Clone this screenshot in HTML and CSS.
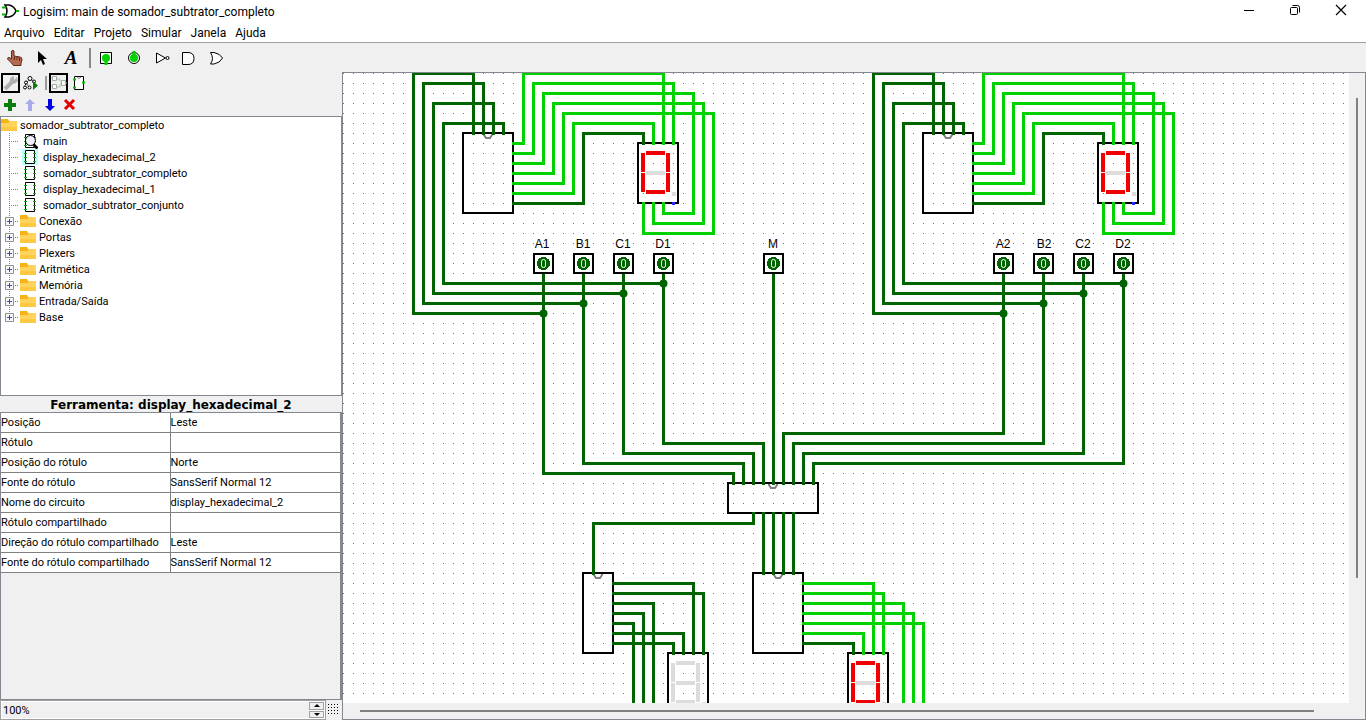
FILE: index.html
```html
<!DOCTYPE html>
<html lang="pt">
<head>
<meta charset="utf-8">
<title>Logisim: main de somador_subtrator_completo</title>
<link rel="stylesheet" href="styles.css">
</head>
<body>
<svg class="defs" aria-hidden="true">
  <symbol id="folder" viewBox="0 0 16 14"><path d="M0 1h7l1 2h8v3H0z" fill="#f5b416"/><path d="M0 5h7l2-2h7v10H0z" fill="#ffd35c"/><path d="M0 9h16v4H0z" fill="#fdc942"/></symbol>
  <symbol id="circuit" viewBox="0 0 16 16"><path d="M3.500 1.500h9v13h-9z" fill="#fff" stroke="#000"/><path d="M2 4.500h3M2 8.500h3M2 12.500h3M11 4.500h3M11 8.500h3M11 12.500h3" stroke="#0bb40b"/></symbol>
  <symbol id="branch" viewBox="0 0 20 16"><path d="M9.500 0v16M11 8.500h8" stroke="#808080" stroke-dasharray="1 1"/></symbol>
  <symbol id="plus" viewBox="0 0 20 16"><path d="M9.500 0v16M15 8.500h4" stroke="#808080" stroke-dasharray="1 1"/><path d="M5.500 4.500h8v8h-8z" fill="#f6f6f6" stroke="#919191"/><path d="M7 8.500h5M9.500 6v5" stroke="#3b52a5"/></symbol>
  <symbol id="plus-last" viewBox="0 0 20 16"><path d="M9.500 0v5M15 8.500h4" stroke="#808080" stroke-dasharray="1 1"/><path d="M5.500 4.500h8v8h-8z" fill="#f6f6f6" stroke="#919191"/><path d="M7 8.500h5M9.500 6v5" stroke="#3b52a5"/></symbol>
</svg>

<header class="titlebar">
  <svg class="logo" width="18" height="16" viewBox="0 0 18 16"><path d="M4 2h4q5 1 7 6-2 5-7 6H4q4-6 0-12z" fill="#fff" stroke="#000" stroke-width="1.500"/><path d="M1 4.500h4M1 11.500h4" stroke="#00b400" stroke-width="2"/><path d="M15 8h3" stroke="#00b400" stroke-width="2"/></svg>
  <h1 class="title">Logisim: main de somador_subtrator_completo</h1>
  <button class="win" aria-label="Minimizar"><svg width="12" height="12" viewBox="0 0 12 12"><path d="M1 6.500h10" stroke="#000"/></svg></button>
  <button class="win" aria-label="Restaurar"><svg width="12" height="12" viewBox="0 0 12 12" fill="none" stroke="#000"><rect x="1.500" y="3.500" width="7" height="7" rx="1"/><path d="M3.500 1.500h5q2 0 2 2v5"/></svg></button>
  <button class="win" aria-label="Fechar"><svg width="12" height="12" viewBox="0 0 12 12"><path d="M1 1l10 10M11 1L1 11" stroke="#000" stroke-width="1.200"/></svg></button>
</header>

<nav class="menu">
  <button>Arquivo</button><button>Editar</button><button>Projeto</button><button>Simular</button><button>Janela</button><button>Ajuda</button>
</nav>

<div class="toolbar" role="toolbar">
  <button aria-label="Testar"><svg width="18" height="18" viewBox="0 0 18 18"><path d="M5.500 2q1.500-1.500 2.500 0v5l6 1q2 0 2 3l-1 3v2.500H7.500L5 13.500 1.500 10q0-2 2-1.500l2 1.500z" fill="#b66a50" stroke="#5c2a1c"/><path d="M8.500 8v3M11 8v3M13.500 9v3" stroke="#5c2a1c"/></svg></button>
  <button aria-label="Editar"><svg width="18" height="18" viewBox="0 0 18 18"><path d="M4 2v12l3-3 2 5 2-1-2-5h4z"/></svg></button>
  <button class="letter" aria-label="Texto">A</button>
  <span class="sep"></span>
  <button aria-label="Entrada"><svg width="18" height="18" viewBox="0 0 18 18"><path d="M3.500 3.500h11v11h-11z" fill="#fff" stroke="#000"/><circle cx="9" cy="9" r="4" fill="#00d200"/><path d="M7.500 12h3v4h-3z" fill="#00d200"/></svg></button>
  <button aria-label="Saída"><svg width="18" height="18" viewBox="0 0 18 18"><circle cx="9" cy="9" r="5.500" fill="#fff" stroke="#000"/><circle cx="9" cy="9" r="4" fill="#00d200"/><path d="M7.500 2h3v4h-3z" fill="#00d200"/></svg></button>
  <button aria-label="Porta NÃO"><svg width="18" height="18" viewBox="0 0 18 18" fill="#fff" stroke="#000"><path d="M3.500 4v10l9-5z"/><circle cx="14.500" cy="9" r="1.500"/></svg></button>
  <button aria-label="Porta E"><svg width="18" height="18" viewBox="0 0 18 18"><path d="M1.500 3.500H7q6 0 6 6t-6 6H1.500z" fill="#fff" stroke="#000"/></svg></button>
  <button aria-label="Porta OU"><svg width="18" height="18" viewBox="0 0 18 18"><path d="M1.500 3.500H5q6 1 8.500 5.500-2.500 5-8.500 6H1.500q4-5.500 0-11.500z" fill="#fff" stroke="#000"/></svg></button>
</div>

<div class="work">
  <aside class="side">
    <div class="views" role="toolbar">
      <button class="on" aria-label="Ferramentas"><svg width="16" height="16" viewBox="0 0 16 16"><path d="M2 14l7-7" stroke="#b0b0b0" stroke-width="4"/><path d="M14 2l-3 3V1q-5 1-4 6 4 4 8-1z" fill="#b0b0b0"/></svg></button>
      <button aria-label="Simulação"><svg width="16" height="16" viewBox="0 0 16 16" fill="#fff" stroke="#000"><path d="M7 4L3 8l-1 4M3 8l3 4M7 4l5 4" stroke-dasharray="2 1" fill="none"/><circle cx="7" cy="3.500" r="2"/><circle cx="3" cy="7.500" r="1.500"/><circle cx="2" cy="12.500" r="1.500"/><circle cx="6.500" cy="12.500" r="1.500"/><circle cx="11" cy="6.500" r="1.500"/><path d="M10 6v9l5-4.500z" fill="#0b7d0b" stroke="none"/></svg></button>
      <span class="sep"></span>
      <button class="on" aria-label="Leiaute"><svg width="16" height="16" viewBox="0 0 16 16" fill="#fff" stroke="#a8a8a8"><path d="M6 4h3v2h2M6 12h3V9h2M14 8h2M0 3h2M0 11h2" stroke="#9bd69b" fill="none"/><path d="M1.500 1.500h4v4h-4zM1.500 9.500h4v4h-4zM10.500 5.500h4v5h-4z"/></svg></button>
      <button aria-label="Aparência"><svg width="16" height="16" viewBox="0 0 16 16"><path d="M3.500 1.500h9v13h-9z" fill="#fff" stroke="#000"/><path d="M6 2q2 3 4 0" fill="none" stroke="#777"/><path d="M2 4.500h3M2 12.500h3M11 7.500h3" stroke="#00c800" stroke-width="2"/></svg></button>
    </div>
    <div class="edits" role="toolbar">
      <button aria-label="Adicionar"><svg width="14" height="14" viewBox="0 0 14 14"><path d="M7 1v12M1 7h12" stroke="#0b7d0b" stroke-width="4"/></svg></button>
      <button aria-label="Subir" disabled><svg width="14" height="14" viewBox="0 0 14 14"><path d="M7 1l5 5H9v7H5V6H2z" fill="#a9a9ec"/></svg></button>
      <button aria-label="Descer"><svg width="14" height="14" viewBox="0 0 14 14"><path d="M7 13l5-5H9V1H5v7H2z" fill="#0000e6"/></svg></button>
      <button aria-label="Remover"><svg width="14" height="14" viewBox="0 0 14 14"><path d="M2 2l9 9M11 2l-9 9" stroke="#e00000" stroke-width="3"/></svg></button>
    </div>
    <div class="explorer">
      <div class="row root"><svg class="ico"><use href="#folder"/></svg>somador_subtrator_completo</div>
      <ul class="tree">
        <li class="row"><svg class="gut"><use href="#branch"/></svg><svg class="circ" viewBox="0 0 16 16"><use href="#circuit" width="16" height="16"/><circle cx="8.500" cy="7.500" r="5" fill="#eef" fill-opacity=".9" stroke="#000"/><path d="M11.500 11.500l4 4" stroke="#000" stroke-width="3"/></svg>main</li>
        <li class="row"><svg class="gut"><use href="#branch"/></svg><svg class="circ picked"><use href="#circuit"/></svg>display_hexadecimal_2</li>
        <li class="row"><svg class="gut"><use href="#branch"/></svg><svg class="circ"><use href="#circuit"/></svg>somador_subtrator_completo</li>
        <li class="row"><svg class="gut"><use href="#branch"/></svg><svg class="circ"><use href="#circuit"/></svg>display_hexadecimal_1</li>
        <li class="row"><svg class="gut"><use href="#branch"/></svg><svg class="circ"><use href="#circuit"/></svg>somador_subtrator_conjunto</li>
        <li class="row"><svg class="gut"><use href="#plus"/></svg><svg class="ico"><use href="#folder"/></svg>Conexão</li>
        <li class="row"><svg class="gut"><use href="#plus"/></svg><svg class="ico"><use href="#folder"/></svg>Portas</li>
        <li class="row"><svg class="gut"><use href="#plus"/></svg><svg class="ico"><use href="#folder"/></svg>Plexers</li>
        <li class="row"><svg class="gut"><use href="#plus"/></svg><svg class="ico"><use href="#folder"/></svg>Aritmética</li>
        <li class="row"><svg class="gut"><use href="#plus"/></svg><svg class="ico"><use href="#folder"/></svg>Memória</li>
        <li class="row"><svg class="gut"><use href="#plus"/></svg><svg class="ico"><use href="#folder"/></svg>Entrada/Saída</li>
        <li class="row"><svg class="gut"><use href="#plus-last"/></svg><svg class="ico"><use href="#folder"/></svg>Base</li>
      </ul>
    </div>
    <h2 class="caption">Ferramenta: display_hexadecimal_2</h2>
    <div class="attrs">
      <table>
        <tr><th>Posição</th><td>Leste</td></tr>
        <tr><th>Rótulo</th><td></td></tr>
        <tr><th>Posição do rótulo</th><td>Norte</td></tr>
        <tr><th>Fonte do rótulo</th><td>SansSerif Normal 12</td></tr>
        <tr><th>Nome do circuito</th><td>display_hexadecimal_2</td></tr>
        <tr><th>Rótulo compartilhado</th><td></td></tr>
        <tr><th>Direção do rótulo compartilhado</th><td>Leste</td></tr>
        <tr><th>Fonte do rótulo compartilhado</th><td>SansSerif Normal 12</td></tr>
      </table>
    </div>
    <div class="zoom">
      <div class="spinner">
        <input type="text" value="100%" aria-label="Zoom">
        <div class="steps">
          <button aria-label="Aumentar"><svg width="6" height="3" viewBox="0 0 6 3"><path d="M0 3l3-3 3 3z"/></svg></button>
          <button aria-label="Diminuir"><svg width="6" height="3" viewBox="0 0 6 3"><path d="M0 0l3 3 3-3z"/></svg></button>
        </div>
      </div>
      <button class="gridbtn" aria-label="Grade"><svg width="12" height="12"><defs><pattern id="mini" width="3" height="3" patternUnits="userSpaceOnUse"><path d="M0 0h1v1H0z"/></pattern></defs><rect width="12" height="12" fill="url(#mini)"/></svg></button>
    </div>
  </aside>

  <main class="pane">
    <svg class="canvas" shape-rendering="crispEdges">
      <defs>
        <pattern id="grid" width="10" height="10" patternUnits="userSpaceOnUse"><path d="M0 0h1v1H0z" fill="#777"/></pattern>
        <g id="pin">
          <rect x="-9" y="-9" width="19" height="19" fill="none" stroke="#000" stroke-width="2"/>
          <circle cx="0.500" cy="0.500" r="6.500" fill="#006400"/>
          <rect x="-1.500" y="-3.500" width="4" height="8" rx="2" fill="none" stroke="#fff" shape-rendering="auto"/>
        </g>
        <path id="notch" d="M-4 1V2L-2 5H2L4 2V1" fill="none" stroke="#808080" stroke-width="2" shape-rendering="auto"/>
        <g id="display">
          <rect width="40" height="60" fill="none" stroke="#000" stroke-width="2"/>
          <path d="M8 8h19v4H8zM3 10h4v19H3zM28 10h4v19h-4zM3 30h4v19H3zM28 30h4v19h-4zM8 47h19v4H8z" fill="currentColor"/>
          <path d="M8 28h19v4H8zM34 49h4v4h-4z" fill="#dcdcdc"/>
          <path d="M34 59h3v3h-3z" fill="#2828ff"/>
        </g>
        <g id="decoder">
          <rect x="120" y="60" width="50" height="80" fill="none" stroke="#000" stroke-width="2"/>
          <use href="#notch" x="145" y="60"/>
          <use href="#display" x="295" y="70"/>
          <g class="wire" transform="translate(.5 .5)">
            <path class="low" d="M130 60V0H70V240H200M140 60V10H80V230H240M150 60V30H90V220H280M160 60V50H100V210H320M170 130H240V60H300V70"/>
            <path class="high" d="M170 70H180V0H320V70M170 80H190V10H330V70M170 90H200V20H350V140H320V130M170 100H210V30H360V150H310V130M170 110H220V40H370V160H300V130M170 120H230V50H310V70"/>
          </g>
          <g fill="#006400" shape-rendering="auto"><circle cx="200.500" cy="240.500" r="4"/><circle cx="240.500" cy="230.500" r="4"/><circle cx="280.500" cy="220.500" r="4"/><circle cx="320.500" cy="210.500" r="4"/></g>
          <use href="#pin" x="200" y="190"/><use href="#pin" x="240" y="190"/><use href="#pin" x="280" y="190"/><use href="#pin" x="320" y="190"/>
        </g>
      </defs>
      <rect width="100%" height="100%" fill="url(#grid)"/>
      <use href="#decoder" color="#f00000"/>
      <use href="#decoder" x="460" color="#f00000"/>
      <use href="#pin" x="430" y="190"/>
      <g fill="none" stroke="#000" stroke-width="2">
        <rect x="385" y="410" width="90" height="30"/>
        <rect x="240" y="500" width="30" height="80"/>
        <rect x="410" y="500" width="50" height="80"/>
      </g>
      <use href="#notch" x="430" y="410"/><use href="#notch" x="255" y="500"/><use href="#notch" x="435" y="500"/>
      <use href="#display" x="325" y="580" color="#dcdcdc"/>
      <use href="#display" x="505" y="580" color="#f00000"/>
      <g class="wire" transform="translate(.5 .5)">
        <path class="low" d="M200 202V400H390V410M240 202V390H400V410M280 202V380H410V410M320 202V370H420V410M430 202V410M660 202V360H440V410M700 202V370H450V410M740 202V380H460V410M780 202V390H470V410M410 440V450H250V500M420 440V500M430 440V500M440 440V500M450 440V500"/>
        <path class="low" d="M270 510H350V580M270 520H360V580M270 530H310V720M270 540H300V720M270 550H290V720M270 560H340V580M270 570H330V580M460 570H510V580"/>
        <path class="high" d="M460 510H530V580M460 520H540V580M460 530H560V720M460 540H570V720M460 550H580V720M460 560H520V580"/>
      </g>
      <g class="labels">
        <text x="199" y="175">A1</text><text x="240" y="175">B1</text><text x="280" y="175">C1</text><text x="320" y="175">D1</text><text x="430" y="175">M</text>
        <text x="660" y="175">A2</text><text x="701" y="175">B2</text><text x="740" y="175">C2</text><text x="780" y="175">D2</text>
      </g>
    </svg>
    <div class="vbar"><div class="thumb"></div></div>
    <div class="hbar"><div class="thumb"></div></div>
  </main>
</div>
</body>
</html>
```
FILE: styles.css
```css
* { box-sizing: border-box; }
body {
  margin: 0;
  height: 100vh;
  display: flex;
  flex-direction: column;
  overflow: hidden;
  background: #f0f0f0;
  color: #000;
  font: 11px/18px Roboto, "Noto Sans", sans-serif;
}
svg { display: block; flex: none; }
button {
  border: 0;
  padding: 0;
  margin: 0;
  background: none;
  color: inherit;
  font: inherit;
  display: flex;
  align-items: center;
  justify-content: center;
}
.defs { position: absolute; width: 0; height: 0; }

.titlebar { display: flex; align-items: center; height: 22px; background: #fff; padding-right: 2px; }
.logo { margin: 0 4px 0 1px; }
.title { flex: 1; margin: 0; padding-top: 2px; font: 12px/20px Roboto, "Noto Sans", sans-serif; }
.win { width: 46px; height: 20px; align-self: flex-start; }
.menu {
  display: flex;
  gap: 9px;
  height: 21px;
  padding: 0 4px;
  background: #fff;
  border-bottom: 1px solid #a0a0a0;
  font: 12px/20px Roboto, "Noto Sans", sans-serif;
}
.menu button { padding-top: 2px; }

.toolbar { display: flex; align-items: center; height: 29px; padding-left: 1px; }
.toolbar button { width: 28px; height: 26px; }
.toolbar .letter { font: italic bold 19px/24px "Liberation Serif", serif; }
.toolbar .sep { width: 2px; height: 20px; margin: 0 1px 0 4px; background: #888; }

.work { flex: 1; min-height: 0; display: flex; }
.side { width: 342px; flex: none; display: flex; flex-direction: column; }
.views { display: flex; align-items: center; height: 22px; gap: 1px; padding-left: 1px; }
.views button { width: 19px; height: 20px; }
.views .on { border: 2px solid #000; }
.views .sep { width: 2px; height: 14px; margin: 0 1px 0 4px; background: #999; }
.edits { display: flex; align-items: center; height: 22px; gap: 6px; padding: 0 3px; }

.explorer { height: 280px; border: 1px solid #828790; background: #fff; }
.tree { list-style: none; margin: 0; padding: 0; }
.row { display: flex; align-items: center; height: 16px; white-space: nowrap; line-height: 17px; }
.ico { width: 16px; height: 14px; margin-right: 3px; }
.gut { width: 20px; height: 16px; margin-left: -1px; }
.circ { width: 16px; height: 16px; margin: 0 5px 0 2px; }
.picked { background: #bff; }

.caption { margin: 0; height: 16px; font: bold 12px/18px "DejaVu Sans", sans-serif; text-align: center; }
.attrs { flex: 1; min-height: 0; border: 1px solid #828790; border-right-width: 2px; }
table { width: 100%; border-collapse: separate; border-spacing: 0; table-layout: fixed; background: #fff; }
th, td {
  height: 20px;
  padding: 1px 0 0;
  border-bottom: 1px solid #808080;
  font-weight: normal;
  line-height: 18px;
  text-align: left;
  vertical-align: top;
  white-space: nowrap;
}
th { border-right: 1px solid #808080; }

.zoom { display: flex; height: 20px; }
.spinner { flex: 1; display: flex; border: 1px solid #a0a0a0; background: #fff; padding: 1px; }
.spinner input { flex: 1; min-width: 0; border: 0; padding: 1px 1px 0; background: #f0f0f0; color: #000; font: inherit; }
.steps { width: 15px; display: flex; flex-direction: column; gap: 1px; background: #fff; }
.steps button { flex: 1; background: #f0f0f0; border: 1px solid #a0a0a0; }
.gridbtn { width: 16px; }

.pane {
  flex: 1;
  min-width: 0;
  display: grid;
  grid-template-columns: 1fr 16px;
  grid-template-rows: 1fr 16px;
  border: 1px solid #828790;
}
.canvas { width: 100%; height: 100%; min-height: 0; background: #fff; overflow: hidden; }
.vbar { padding: 25px 7px 125px 7px; }
.hbar { padding: 7px 35px 7px 17px; }
.thumb { height: 100%; min-height: 2px; background: #808080; }
.wire { fill: none; stroke-width: 3px; stroke-linecap: square; }
.low { stroke: #006400; }
.high { stroke: #00d200; }
.labels { font: 12px "Liberation Sans", sans-serif; text-anchor: middle; }
```
